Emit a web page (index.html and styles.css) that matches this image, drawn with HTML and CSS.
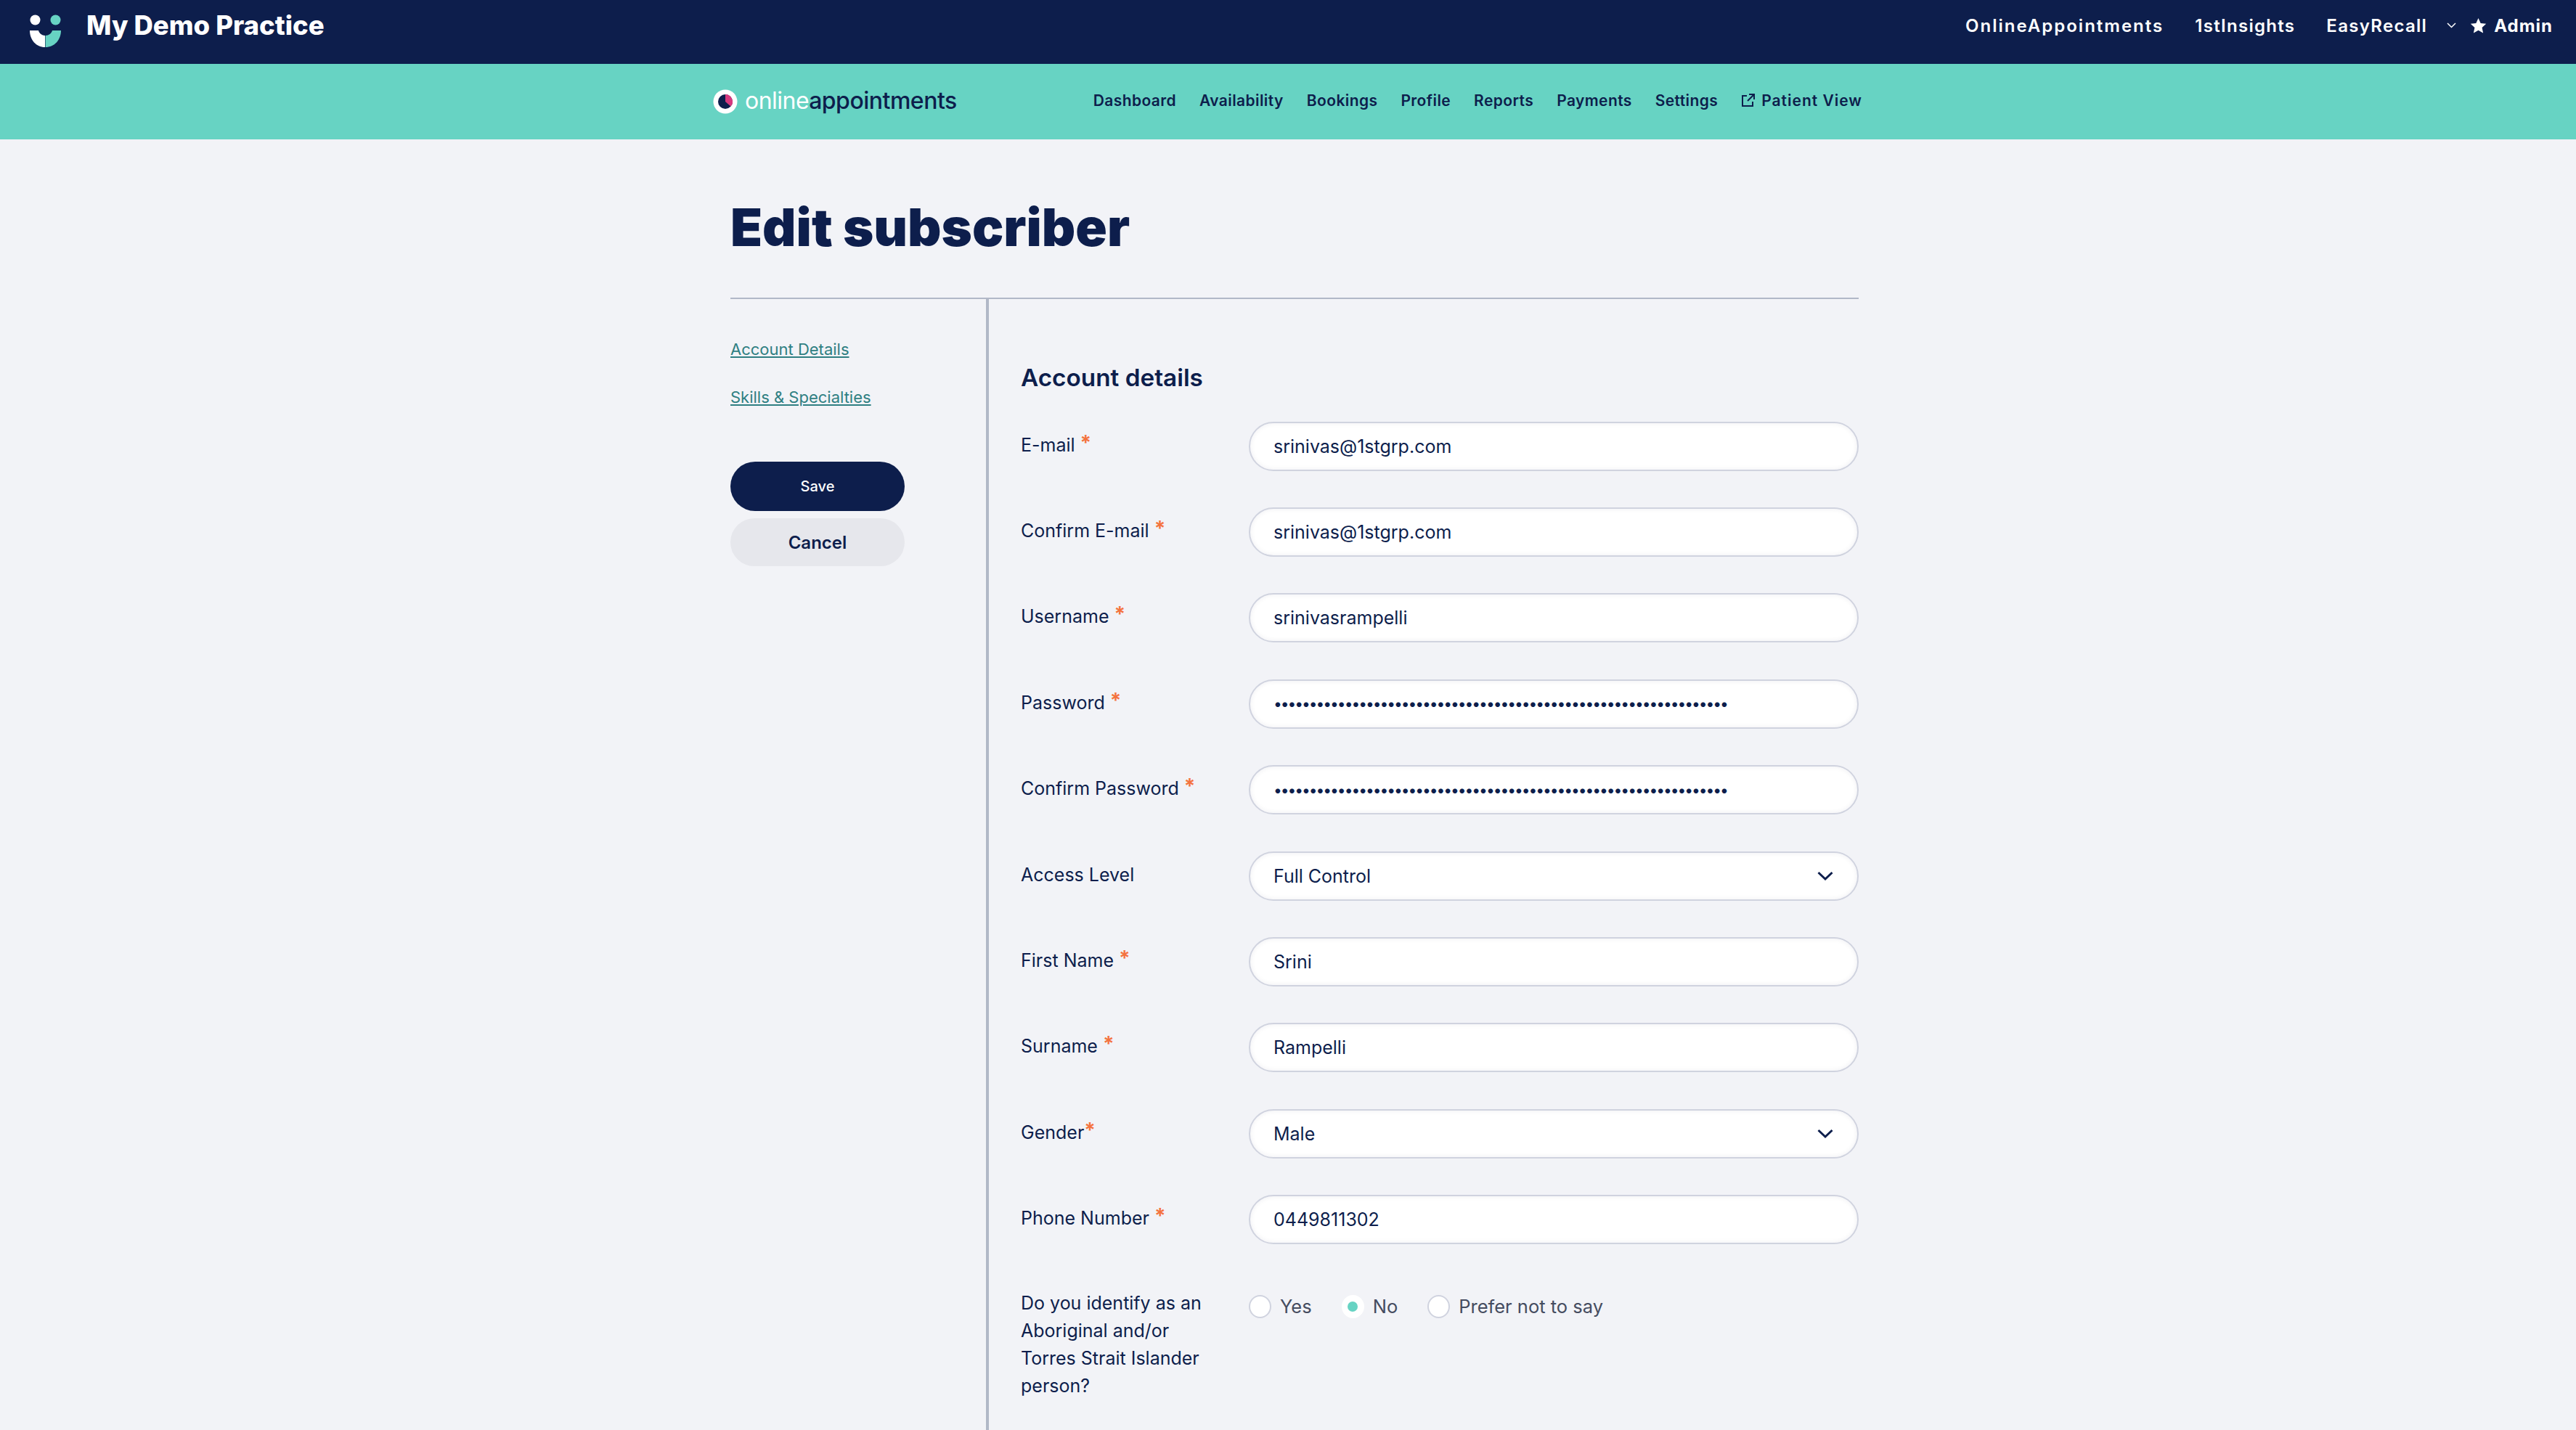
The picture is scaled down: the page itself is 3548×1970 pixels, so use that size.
FILE: index.html
```html
<!DOCTYPE html>
<html>
<head>
  <meta charset="utf-8">
  <title>Edit subscriber</title>
  <link rel="stylesheet" href="styles.css">
</head>
<body>
  <div class="topbar">
    <div class="brand">
      <svg class="brand-logo" viewBox="0 0 43 45" width="43" height="45">
        <circle cx="7.5" cy="7.5" r="7" fill="#fff"/>
        <circle cx="35.5" cy="7.5" r="7" fill="#67d3c3"/>
        <path d="M0 22H12C13 26 17 29 21 29V45C9 45 0 35 0 22Z" fill="#fff"/>
        <path d="M21.600 29C26 29 30 26 31 22H43C43 35 34 45 21.600 45Z" fill="#67d3c3"/>
      </svg>
      <span class="brand-name">My Demo Practice</span>
    </div>
    <div class="top-links">
      <a class="top-link">OnlineAppointments</a>
      <a class="top-link tight">1stInsights</a>
      <a class="top-link tight">EasyRecall</a>
      <svg class="top-chevron" viewBox="0 0 13 8" width="13" height="8"><path d="M1 1L6.500 6.500L12 1" fill="none" stroke="#fff" stroke-width="1.500"/></svg>
      <a class="top-link admin">
        <svg viewBox="0 0 24 24" width="23" height="23"><path d="M12 1L15.300 8.300L23.200 9.200L17.300 14.500L18.900 22.400L12 18.400L5.100 22.400L6.700 14.500L.8 9.200L8.700 8.300Z" fill="#fff"/></svg>
        Admin
      </a>
    </div>
  </div>

  <div class="subnav">
    <div class="subnav-inner">
      <div class="oa-logo">
        <svg viewBox="0 0 34 34" width="34" height="34">
          <circle cx="17" cy="17" r="16.500" fill="#fff"/>
          <circle cx="17" cy="17" r="10" fill="#0d1e4c"/>
          <path d="M17 7A10 10 0 0 1 24.500 23.600L17 17Z" fill="#d6397f"/>
        </svg>
        <span class="oa-word"><span class="oa-light">online</span>appointments</span>
      </div>
      <div class="subnav-links">
        <a>Dashboard</a>
        <a>Availability</a>
        <a>Bookings</a>
        <a>Profile</a>
        <a>Reports</a>
        <a>Payments</a>
        <a>Settings</a>
        <a class="patient-view">
          <svg viewBox="0 0 20 20" width="20" height="20"><path d="M8 4H2V18H16V12M11 2H18V9M18 2L9 11" fill="none" stroke="#0d1e4c" stroke-width="2"/></svg>
          Patient View
        </a>
      </div>
    </div>
  </div>

  <div class="page">
    <h1>Edit subscriber</h1>
    <div class="columns">
      <div class="sidebar">
        <a class="side-link">Account Details</a>
        <a class="side-link">Skills &amp; Specialties</a>
        <button class="btn btn-save">Save</button>
        <button class="btn btn-cancel">Cancel</button>
      </div>
      <div class="form">
        <h2>Account details</h2>
        <div class="fields">
          <div class="field">
            <label>E-mail <span class="req">*</span></label>
            <input class="control" type="text" value="srinivas@1stgrp.com">
          </div>
          <div class="field">
            <label>Confirm E-mail <span class="req">*</span></label>
            <input class="control" type="text" value="srinivas@1stgrp.com">
          </div>
          <div class="field">
            <label>Username <span class="req">*</span></label>
            <input class="control" type="text" value="srinivasrampelli">
          </div>
          <div class="field">
            <label>Password <span class="req">*</span></label>
            <input class="control secret" type="password" value="0000000000000000000000000000000000000000000000000000000000000000">
          </div>
          <div class="field">
            <label>Confirm Password <span class="req">*</span></label>
            <input class="control secret" type="password" value="0000000000000000000000000000000000000000000000000000000000000000">
          </div>
          <div class="field">
            <label>Access Level</label>
            <div class="select-wrap">
              <select class="control"><option>Full Control</option></select>
              <svg class="select-arrow" viewBox="0 0 22 14" width="22" height="14"><path d="M1.500 2L11 11L20.500 2" fill="none" stroke="#0d1e4c" stroke-width="3"/></svg>
            </div>
          </div>
          <div class="field">
            <label>First Name <span class="req">*</span></label>
            <input class="control" type="text" value="Srini">
          </div>
          <div class="field">
            <label>Surname <span class="req">*</span></label>
            <input class="control" type="text" value="Rampelli">
          </div>
          <div class="field">
            <label>Gender<span class="req">*</span></label>
            <div class="select-wrap">
              <select class="control"><option>Male</option></select>
              <svg class="select-arrow" viewBox="0 0 22 14" width="22" height="14"><path d="M1.500 2L11 11L20.500 2" fill="none" stroke="#0d1e4c" stroke-width="3"/></svg>
            </div>
          </div>
          <div class="field">
            <label>Phone Number <span class="req">*</span></label>
            <input class="control" type="text" value="0449811302">
          </div>
          <div class="field field-radio">
            <label>Do you identify as an Aboriginal and/or Torres Strait Islander person?</label>
            <div class="radios">
              <div class="radio"><span class="radio-mark"></span>Yes</div>
              <div class="radio"><span class="radio-mark checked"></span>No</div>
              <div class="radio"><span class="radio-mark"></span>Prefer not to say</div>
            </div>
          </div>
        </div>
      </div>
    </div>
  </div>
</body>
</html>
```

FILE: styles.css
```css
:root {
  --navy: #0d1e4c;
  --teal: #67d3c3;
  --page-bg: #f2f3f7;
  --line: #b1b8c7;
  --control-line: #d0d3df;
  --required: #f4733f;
}

* {
  margin: 0;
  padding: 0;
  box-sizing: border-box;
  font-family: 'Inter', 'Noto Sans', sans-serif;
}

html, body {
  height: 100%;
  overflow: hidden;
}

body {
  display: flex;
  flex-direction: column;
  background-color: var(--page-bg);
  color: var(--navy);
}

/* top bar */
.topbar {
  height: 88px;
  flex-shrink: 0;
  background-color: var(--navy);
  display: flex;
  align-items: center;
  justify-content: space-between;
  padding: 0 32px 18px 41px;
  color: #fff;
}

.brand {
  display: flex;
  align-items: center;
  gap: 35px;
}

.brand-logo {
  margin-top: 14px;
}

.brand-name {
  font-size: 36.500px;
  font-weight: 800;
}

.top-links {
  display: flex;
  align-items: center;
}

.top-link {
  font-size: 24px;
  font-weight: 600;
  letter-spacing: 2px;
  margin-right: 43px;
}

.top-link.tight {
  letter-spacing: 1.300px;
}

.top-chevron {
  margin: 0 19px 0 -16px;
}

.top-link.admin {
  display: flex;
  align-items: center;
  gap: 10px;
  margin-right: 0;
  font-weight: 700;
  letter-spacing: 1px;
}

/* teal nav */
.subnav {
  height: 104px;
  flex-shrink: 0;
  background-color: var(--teal);
}

.subnav-inner {
  width: 1583px;
  height: 100%;
  margin-left: 982px;
  display: flex;
  align-items: center;
  justify-content: space-between;
}

.oa-logo {
  display: flex;
  align-items: center;
  gap: 10px;
}

.oa-word {
  font-size: 32px;
  font-weight: 500;
  letter-spacing: -0.5px;
  margin-top: -4px;
}

.oa-light {
  color: #fff;
  font-weight: 400;
}

.subnav-links {
  display: flex;
  align-items: center;
  gap: 32px;
  font-size: 21px;
  font-weight: 600;
  letter-spacing: 0.4px;
  margin-top: -4px;
}

.patient-view {
  display: flex;
  align-items: center;
  gap: 8px;
  letter-spacing: 1px;
}

/* page */
.page {
  flex: 1;
  min-height: 0;
  width: 1554px;
  margin-left: 1006px;
  display: flex;
  flex-direction: column;
}

h1 {
  font-size: 72px;
  font-weight: 900;
  line-height: 80px;
  padding: 81px 0 57px;
  border-bottom: 2px solid var(--line);
}

.columns {
  flex: 1;
  display: flex;
}

.sidebar {
  width: 356px;
  flex-shrink: 0;
  display: flex;
  flex-direction: column;
  align-items: flex-start;
  padding-top: 56px;
  border-right: 4px solid var(--line);
}

.side-link {
  font-size: 22px;
  line-height: 26px;
  margin-bottom: 40px;
  color: #2f7f82;
  text-decoration: underline;
}

.btn {
  width: 240px;
  border: none;
  border-radius: 34px;
}

.btn-save {
  height: 68px;
  margin-top: 36px;
  background-color: var(--navy);
  color: #fff;
  font-size: 20px;
  font-weight: 500;
}

.btn-cancel {
  height: 66px;
  margin-top: 10px;
  background-color: #e6e7ec;
  color: var(--navy);
  font-size: 24px;
  font-weight: 600;
}

.form {
  flex: 1;
  padding: 88px 0 0 44px;
}

h2 {
  font-size: 33.300px;
  font-weight: 600;
  line-height: 40px;
  margin-bottom: 40.600px;
}

.fields {
  display: flex;
  flex-direction: column;
  gap: 50.400px;
}

.field {
  display: grid;
  grid-template-columns: 314px 1fr;
  align-items: center;
}

.field label {
  font-size: 25px;
  line-height: 38px;
  padding-bottom: 4px;
}

.req {
  color: var(--required);
  font-size: 28px;
  font-weight: 700;
  vertical-align: 2px;
  line-height: 1;
}

.control {
  display: block;
  width: 100%;
  height: 68px;
  padding: 0 32px;
  border: 2px solid var(--control-line);
  border-radius: 34px;
  background-color: #fff;
  box-shadow: inset 0 0 7px rgba(13, 30, 76, 0.07);
  color: var(--navy);
  font-size: 25px;
  appearance: none;
  outline: none;
}

.control.secret {
  font-size: 21px;
  letter-spacing: -2.050px;
}

.select-wrap {
  position: relative;
}

.select-arrow {
  position: absolute;
  top: 27px;
  right: 35px;
}

.field-radio {
  align-items: start;
  margin-top: 11px;
}

.field-radio label {
  width: 270px;
}

.radios {
  display: flex;
  gap: 41px;
  padding-top: 8px;
}

.radio {
  display: flex;
  align-items: center;
  gap: 12px;
  font-size: 25.500px;
  color: #454c5f;
}

.radio-mark {
  width: 31px;
  height: 32px;
  border: 2px solid var(--control-line);
  border-radius: 50%;
  background-color: #fff;
  display: flex;
  align-items: center;
  justify-content: center;
}

.radio-mark.checked {
  border-color: #fff;
}

.radio-mark.checked::after {
  content: "";
  width: 14px;
  height: 14px;
  border-radius: 50%;
  background-color: var(--teal);
}
```
